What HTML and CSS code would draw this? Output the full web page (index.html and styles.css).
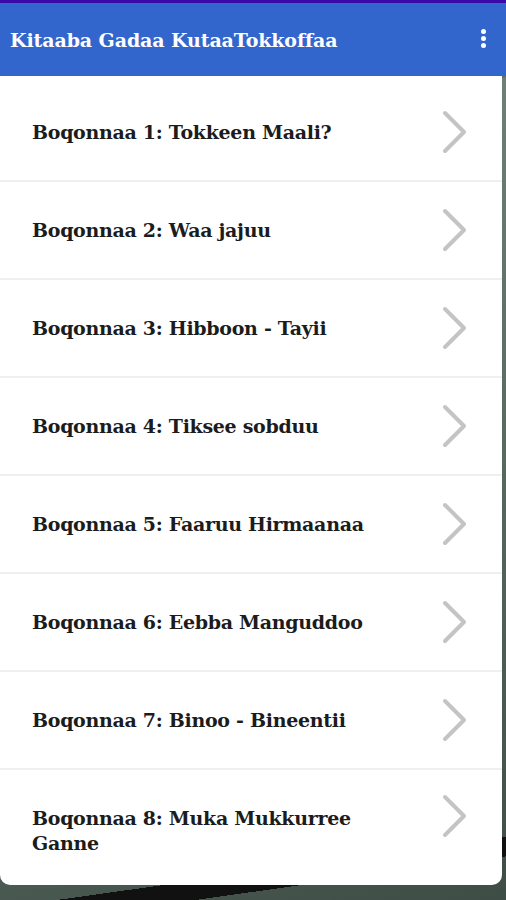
FILE: index.html
```html
<!DOCTYPE html>
<html lang="om">
<head>
  <meta charset="UTF-8" />
  <meta name="viewport" content="width=device-width, initial-scale=1.0"/>
  <title>Kitaaba Gadaa KutaaTokkoffaa</title>
  <link rel="stylesheet" href="styles.css">
</head>
<body>

  <div id="statusbar"></div>

  <div id="appbar">
    <span class="title">Kitaaba Gadaa KutaaTokkoffaa</span>
    <span class="menu"><i></i><i></i><i></i></span>
  </div>

  <div id="chapters">
    <div class="row"><span>Boqonnaa 1: Tokkeen Maali?</span><svg class="chev" viewBox="0 0 26 44"><polyline points="3,3 22,22 3,41"/></svg></div>
    <div class="row"><span>Boqonnaa 2: Waa jajuu</span><svg class="chev" viewBox="0 0 26 44"><polyline points="3,3 22,22 3,41"/></svg></div>
    <div class="row"><span>Boqonnaa 3: Hibboon - Tayii</span><svg class="chev" viewBox="0 0 26 44"><polyline points="3,3 22,22 3,41"/></svg></div>
    <div class="row"><span>Boqonnaa 4: Tiksee sobduu</span><svg class="chev" viewBox="0 0 26 44"><polyline points="3,3 22,22 3,41"/></svg></div>
    <div class="row"><span>Boqonnaa 5: Faaruu Hirmaanaa</span><svg class="chev" viewBox="0 0 26 44"><polyline points="3,3 22,22 3,41"/></svg></div>
    <div class="row"><span>Boqonnaa 6: Eebba Manguddoo</span><svg class="chev" viewBox="0 0 26 44"><polyline points="3,3 22,22 3,41"/></svg></div>
    <div class="row"><span>Boqonnaa 7: Binoo - Bineentii</span><svg class="chev" viewBox="0 0 26 44"><polyline points="3,3 22,22 3,41"/></svg></div>
    <div class="row last"><span>Boqonnaa 8: Muka Mukkurree Ganne</span><svg class="chev top" viewBox="0 0 26 44"><polyline points="3,3 22,22 3,41"/></svg></div>
  </div>

</body>
</html>
```

FILE: styles.css
```css
body {
  margin: 0;
  font-family: "DejaVu Serif", "Liberation Serif", serif;
  background:
    linear-gradient(172deg, transparent 93.5%, #111 93.5%, #111 95.5%, transparent 95.5%),
    linear-gradient(160deg, #7d8f87 0%, #56695f 60%, #3e4d46 100%);
  height: 900px;
  overflow: hidden;
}
#statusbar {
  height: 3px;
  background: #3a0aa8;
}
#appbar {
  height: 73px;
  background: #3366cc;
  display: flex;
  align-items: center;
  justify-content: space-between;
  padding: 0 20px 0 10px;
  box-shadow: 0 1px 2px rgba(0, 0, 0, 0.25);
}
#appbar .title {
  color: white;
  font-weight: bold;
  font-size: 19px;
  letter-spacing: -0.1px;
}
#appbar .menu {
  display: flex;
  flex-direction: column;
  gap: 2px;
  margin-top: -2px;
}
#appbar .menu i {
  width: 5px;
  height: 5px;
  border-radius: 50%;
  background: white;
}
#chapters {
  background: white;
  padding-top: 8px;
  margin-right: 4px;
  border-radius: 0 0 10px 10px;
}
.row {
  min-height: 98px;
  box-sizing: border-box;
  padding: 0 34px 0 32px;
  display: flex;
  align-items: center;
  gap: 12px;
  border-bottom: 2px solid #efefef;
  font-size: 19px;
  font-weight: bold;
  color: #1c1c1c;
  letter-spacing: -0.3px;
}
.row span {
  flex: 1;
  line-height: 25px;
}
.row.last {
  border-bottom: none;
  padding-top: 36px;
  padding-bottom: 29px;
  min-height: 115px;
  align-items: flex-start;
  margin-left: 4px;
  padding-left: 28px;
}
.row.last span {
  max-width: 330px;
}
.chev {
  width: 26px;
  height: 44px;
  flex-shrink: 0;
  margin-left: auto;
}
.chev polyline {
  fill: none;
  stroke: #c4c4c4;
  stroke-width: 4;
  stroke-linecap: round;
  stroke-linejoin: round;
}
.chev.top {
  margin-top: -12px;
}
```
